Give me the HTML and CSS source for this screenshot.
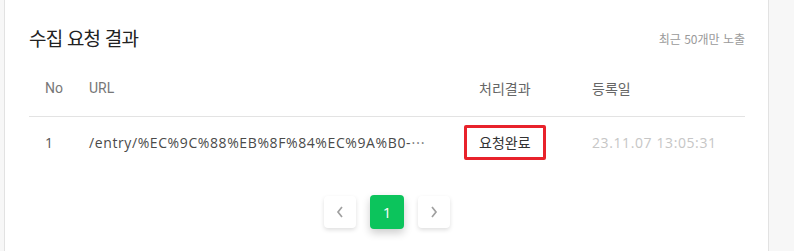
FILE: index.html
```html
<!DOCTYPE html>
<html lang="ko">
<head>
<meta charset="utf-8">
<link rel="stylesheet" href="styles.css">
</head>
<body>
<div class="card">
  <div class="head">
    <h2 class="title">수집 요청 결과</h2>
    <span class="note">최근 50개만 노출</span>
  </div>
  <div class="table">
    <div class="row thead">
      <div class="c no">No</div>
      <div class="c url">URL</div>
      <div class="c st">처리결과</div>
      <div class="c dt">등록일</div>
    </div>
    <div class="row tbody">
      <div class="c no">1</div>
      <div class="c url"><span class="ell">/entry/%EC%9C%88%EB%8F%84%EC%9A%B0-</span><span class="dots">⋯</span></div>
      <div class="c st"><span class="badge">요청완료</span></div>
      <div class="c dt date">23.11.07 13:05:31</div>
    </div>
  </div>
  <div class="pager">
    <button class="pg"><svg width="10" height="14" viewBox="0 0 10 14"><path d="M7 2 L3 7 L7 12" fill="none" stroke="#a0a0a0" stroke-width="1.7"/></svg></button>
    <button class="pg active">1</button>
    <button class="pg"><svg width="10" height="14" viewBox="0 0 10 14"><path d="M3 2 L7 7 L3 12" fill="none" stroke="#a0a0a0" stroke-width="1.7"/></svg></button>
  </div>
</div>
</body>
</html>
```
FILE: styles.css
```css
html, body {
  margin: 0;
  padding: 0;
  background: #f7f7f7;
  height: 251px;
  overflow: hidden;
}
body {
  font-family: "Noto Sans CJK KR", "Noto Sans", sans-serif;
}
.card {
  margin-left: 4px;
  width: 765px;
  height: 251px;
  background: #fff;
  border-left: 1px solid #e2e2e2;
  border-right: 1px solid #e2e2e2;
  padding: 24px 23px 0 24px;
  box-sizing: border-box;
}
.head {
  display: flex;
  justify-content: space-between;
  align-items: center;
  height: 28px;
}
.title {
  margin: 0;
  font-size: 19px;
  font-weight: 400;
  color: #222;
  line-height: 28px;
  letter-spacing: -0.8px;
}
.note {
  font-size: 12px;
  color: #9a9a9a;
}
.table {
  margin-top: 12px;
}
.row {
  display: grid;
  grid-template-columns: 44px 391px 112px 1fr;
  align-items: center;
}
.thead {
  border-bottom: 1px solid #e3e3e3;
  padding: 14px 0 18px;
  font-size: 14px;
  line-height: 20px;
  color: #666;
}
.thead .no, .thead .url { font-family: Roboto, "Noto Sans CJK KR", sans-serif; color: #777; }
.c { padding-left: 16px; white-space: nowrap; }
.st { padding-left: 0; }
.thead .st { padding-left: 15px; }
.tbody {
  padding: 8px 0 9px;
  font-size: 14px;
  line-height: 20px;
  color: #444;
}
.tbody .no, .tbody .url, .tbody .date {
  font-family: "Open Sans", "Noto Sans", sans-serif;
  letter-spacing: 0.6px;
}
.tbody .no { color: #555; }
.url { overflow: hidden; }
.ell { color: #4a4a4a; }
.dots {
  font-family: "Noto Sans CJK KR", sans-serif;
  color: #666;
  letter-spacing: 0;
}
.badge {
  display: block;
  box-sizing: border-box;
  width: 82px;
  height: 35px;
  line-height: 29px;
  border: 3px solid #e8222b;
  border-radius: 2px;
  padding-left: 12px;
  color: #333;
}
.date { color: #c6c6c6; }
.pager {
  display: flex;
  justify-content: center;
  align-items: center;
  gap: 14px;
  margin-top: 26px;
}
.pg {
  width: 32px;
  height: 32px;
  border: none;
  border-radius: 4px;
  background: #fff;
  box-shadow: 0 2px 4px rgba(0,0,0,0.13);
  display: flex;
  align-items: center;
  justify-content: center;
  padding: 0;
  font-family: "Open Sans", sans-serif;
}
.pg.active {
  width: 34px;
  height: 34px;
  background: #0cc45c;
  color: #fff;
  font-size: 15px;
  box-shadow: 0 4px 8px rgba(0,0,0,0.2);
}
```
